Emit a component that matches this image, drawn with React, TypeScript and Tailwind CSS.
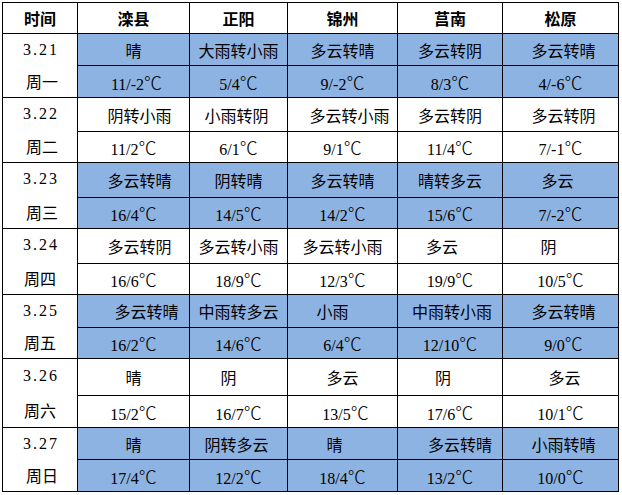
import React from 'react';

type Cell = { t: string; c?: string };
type Day = { date: string; week: string; wc?: string; blue: boolean; weather: Cell[]; temps: Cell[] };

const heads = ['时间', '滦县', '正阳', '锦州', '莒南', '松原'];

const days: Day[] = [
  {
    date: '3.21', week: '周一', wc: 'pl-[4px]', blue: true,
    weather: [{ t: '晴' }, { t: '大雨转小雨' }, { t: '多云转晴' }, { t: '多云转阴' }, { t: '多云转晴', c: 'pl-[6px]' }],
    temps: [{ t: '11/-2', c: 'pl-[6px]' }, { t: '5/4' }, { t: '9/-2' }, { t: '8/3' }, { t: '4/-6' }],
  },
  {
    date: '3.22', week: '周二', wc: 'pl-[4px]', blue: false,
    weather: [{ t: '阴转小雨', c: 'pl-[12px]' }, { t: '小雨转阴', c: 'pr-[4px]' }, { t: '多云转小雨', c: 'pl-[14px]' }, { t: '多云转阴' }, { t: '多云转阴', c: 'pl-[6px]' }],
    temps: [{ t: '11/2' }, { t: '6/1' }, { t: '9/1' }, { t: '11/4' }, { t: '7/-1' }],
  },
  {
    date: '3.23', week: '周三', wc: 'pl-[4px]', blue: true,
    weather: [{ t: '多云转晴', c: 'pl-[12px]' }, { t: '阴转晴' }, { t: '多云转晴' }, { t: '晴转多云' }, { t: '多云', c: 'pr-[6px]' }],
    temps: [{ t: '16/4' }, { t: '14/5' }, { t: '14/2' }, { t: '15/6' }, { t: '7/-2' }],
  },
  {
    date: '3.24', week: '周四', blue: false,
    weather: [{ t: '多云转阴', c: 'pl-[12px]' }, { t: '多云转小雨' }, { t: '多云转小雨' }, { t: '多云', c: 'pr-[16px]' }, { t: '阴', c: 'pr-[24px]' }],
    temps: [{ t: '16/6' }, { t: '18/9' }, { t: '12/3' }, { t: '19/9' }, { t: '10/5' }],
  },
  {
    date: '3.25', week: '周五', blue: true,
    weather: [{ t: '多云转晴', c: 'pl-[26px]' }, { t: '中雨转多云' }, { t: '小雨', c: 'pr-[20px]' }, { t: '中雨转小雨', c: 'pl-[4px]' }, { t: '多云转晴', c: 'pl-[6px]' }],
    temps: [{ t: '16/2' }, { t: '14/6' }, { t: '6/4' }, { t: '12/10' }, { t: '9/0', c: 'pl-[6px]' }],
  },
  {
    date: '3.26', week: '周六', blue: false,
    weather: [{ t: '晴' }, { t: '阴', c: 'pr-[20px]' }, { t: '多云' }, { t: '阴', c: 'pr-[14px]' }, { t: '多云', c: 'pl-[8px]' }],
    temps: [{ t: '15/2' }, { t: '16/7' }, { t: '13/5', c: 'pl-[6px]' }, { t: '17/6' }, { t: '10/1' }],
  },
  {
    date: '3.27', week: '周日', wc: 'pl-[4px]', blue: true,
    weather: [{ t: '晴' }, { t: '阴转多云', c: 'pr-[4px]' }, { t: '晴', c: 'pr-[16px]' }, { t: '多云转晴', c: 'pl-[20px]' }, { t: '小雨转晴', c: 'pl-[6px]' }],
    temps: [{ t: '17/4' }, { t: '12/2' }, { t: '18/4' }, { t: '13/2' }, { t: '10/0' }],
  },
];

const cjk = "font-['Noto_Sans_CJK_SC',sans-serif]";
const num = "font-['Liberation_Serif','Noto_Sans_CJK_SC',serif]";

export default function App() {
  return (
    <div className="w-[622px] h-[495px] bg-white pt-[2px] pl-[2px] text-black">
      <div className="w-[617px] grid grid-cols-[74px_111px_97px_109px_104px_115px] grid-rows-[30px_31px_31px_33px_30px_34px_30px_34px_30px_32px_30px_36px_31px_31px_31px] gap-px bg-black p-px">
        {heads.map((h) => (
          <div key={h} className={`bg-white flex items-center justify-center text-[16px] font-bold leading-none ${cjk}`}>
            {h}
          </div>
        ))}
        {days.map((d) => {
          const bg = d.blue ? 'bg-[#8db3e2]' : 'bg-white';
          return (
            <React.Fragment key={d.date}>
              <div className="row-span-2 bg-white flex flex-col justify-around items-center leading-none">
                <span className={`text-[16px] tracking-[2px] pl-[2px] ${num}`}>{d.date}</span>
                <span className={`text-[16px] ${cjk} ${d.wc ?? ''}`}>{d.week}</span>
              </div>
              {d.weather.map((w, i) => (
                <div key={'w' + i} className={`${bg} flex items-center justify-center text-[16px] leading-none ${cjk} ${w.c ?? ''}`}>
                  {w.t}
                </div>
              ))}
              {d.temps.map((w, i) => (
                <div key={'t' + i} className={`${bg} flex items-center justify-center text-[16px] leading-none ${num} ${w.c ?? ''}`}>
                  <span className="pt-[2px]">
                    {w.t}
                    <span className={`${cjk} text-[18px] font-light`}>℃</span>
                  </span>
                </div>
              ))}
            </React.Fragment>
          );
        })}
      </div>
    </div>
  );
}
